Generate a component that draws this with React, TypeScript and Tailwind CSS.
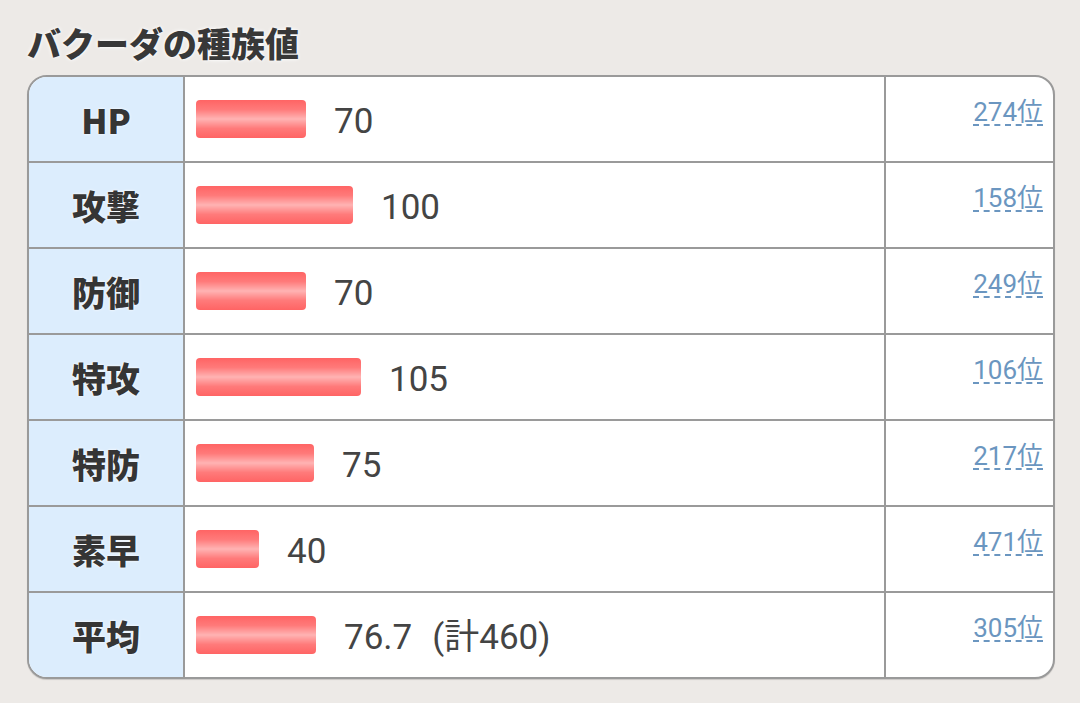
const stats = [
  { label: 'HP', value: 70, text: '70', total: '', rank: '274位' },
  { label: '攻撃', value: 100, text: '100', total: '', rank: '158位' },
  { label: '防御', value: 70, text: '70', total: '', rank: '249位' },
  { label: '特攻', value: 105, text: '105', total: '', rank: '106位' },
  { label: '特防', value: 75, text: '75', total: '', rank: '217位' },
  { label: '素早', value: 40, text: '40', total: '', rank: '471位' },
  { label: '平均', value: 76.7, text: '76.7', total: '(計460)', rank: '305位' },
]

const font = "font-['Roboto','Noto_Sans_CJK_JP',sans-serif]"

export default function App() {
  return (
    <div className={`min-h-[703px] w-[1080px] bg-[#edeae7] pl-[27px] pr-[25px] pt-[20px] ${font}`}>
      <h2 className="text-[34px] font-black leading-[46px] text-[#383838] [text-shadow:0_0_4px_#fff,0_0_2px_#fff] font-['Noto_Sans_CJK_JP',sans-serif]">
        バクーダの種族値
      </h2>
      <div className="mt-[9px] overflow-hidden rounded-[20px] border-2 border-[#9a9a9a] bg-white shadow-[0_1px_1px_rgba(0,0,0,0.15)]">
        {stats.map((s, i) => (
          <div
            key={s.label}
            className={`flex ${i === 0 ? 'h-[84px]' : 'h-[86px] border-t-2 border-[#9a9a9a]'}`}
          >
            <div className="flex w-[156px] shrink-0 items-center justify-center border-r-2 border-[#9a9a9a] bg-[#dcedfd]">
              <span className="text-[34px] font-black text-[#353535] [text-shadow:0_0_3px_#fff,0_0_1px_#fff] font-['Noto_Sans_CJK_JP',sans-serif]">
                {s.label}
              </span>
            </div>
            <div className="flex flex-1 items-center border-r-2 border-[#9a9a9a] pl-[11px]">
              <div
                className="h-[38px] rounded-[4px] bg-[linear-gradient(to_bottom,#ff6464_0%,#ff7a7a_25%,#ffb3b3_50%,#ff7a7a_75%,#ff6464_100%)]"
                style={{ width: `${Math.round(s.value * 1.57)}px` }}
              />
              <span className="ml-[28px] pt-[6px] text-[35px] text-[#444]">{s.text}</span>
              {s.total && <span className="ml-[20px] pt-[6px] text-[35px] text-[#444]">{s.total}</span>}
            </div>
            <div className="flex w-[167px] shrink-0 items-start justify-end pr-[10px] pt-[20px]">
              <a className="text-[26px] leading-[31px] text-[#6b96c0] underline decoration-dashed decoration-[1.5px] underline-offset-[3px]">
                {s.rank}
              </a>
            </div>
          </div>
        ))}
      </div>
    </div>
  )
}
